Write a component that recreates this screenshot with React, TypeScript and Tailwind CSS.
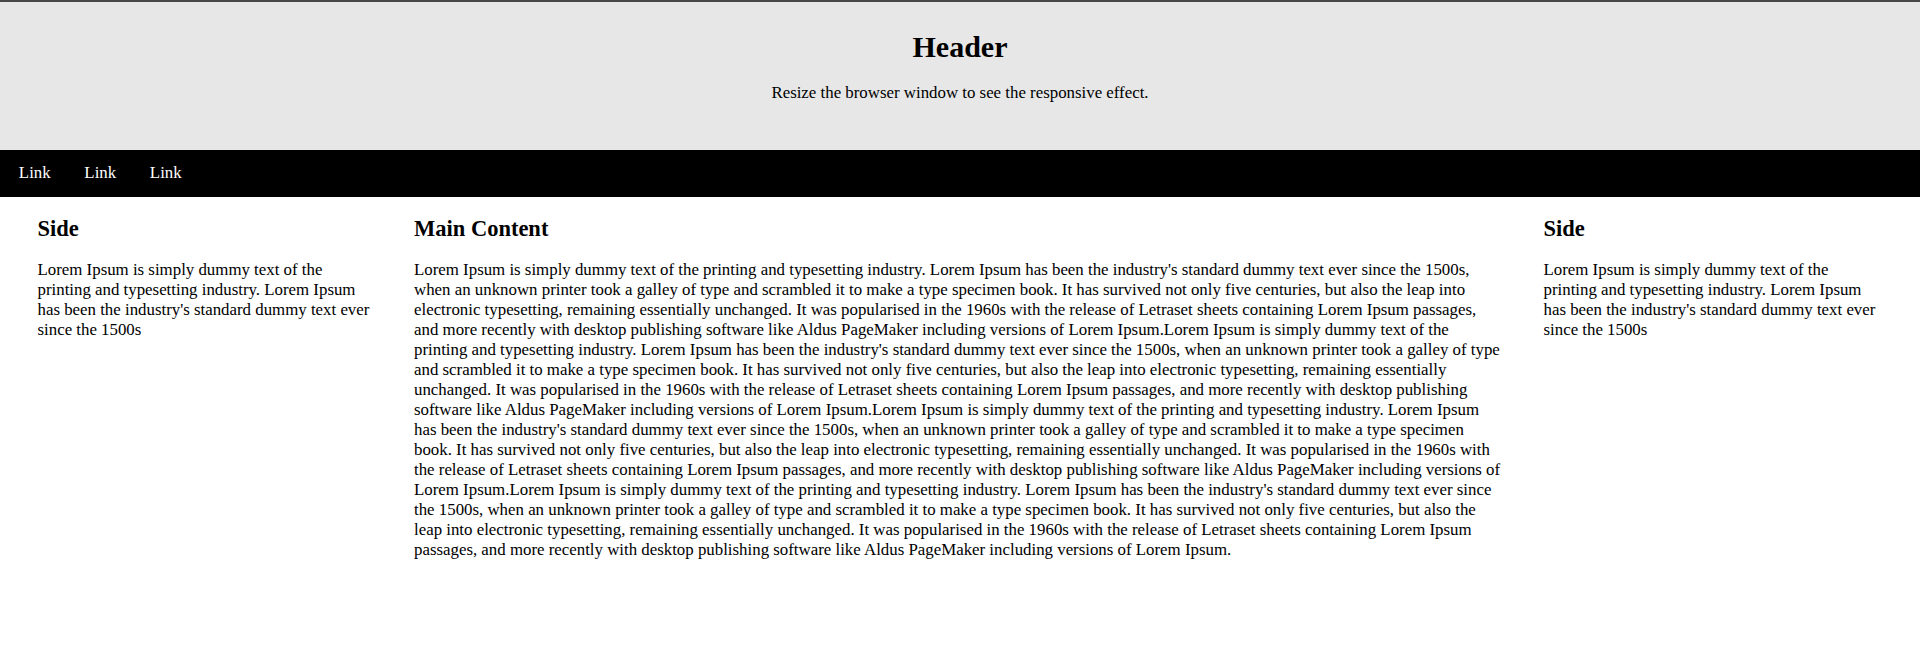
const lorem =
  "Lorem Ipsum is simply dummy text of the printing and typesetting industry. Lorem Ipsum has been the industry's standard dummy text ever since the 1500s, when an unknown printer took a galley of type and scrambled it to make a type specimen book. It has survived not only five centuries, but also the leap into electronic typesetting, remaining essentially unchanged. It was popularised in the 1960s with the release of Letraset sheets containing Lorem Ipsum passages, and more recently with desktop publishing software like Aldus PageMaker including versions of Lorem Ipsum.";

const sideText =
  "Lorem Ipsum is simply dummy text of the printing and typesetting industry. Lorem Ipsum has been the industry's standard dummy text ever since the 1500s";

type ColumnProps = {
  title: string;
  text: string;
  className: string;
};

function Column(props: ColumnProps) {
  return (
    <div className={`${props.className} shrink-0 pl-[18.75px] pt-[18.75px]`}>
      <h2 className="mb-[18px] text-[22.5px] font-bold leading-[25.9px]">{props.title}</h2>
      <p className="text-[16.85px] leading-[20px]">{props.text}</p>
    </div>
  );
}

export default function App() {
  const links = ["Link", "Link", "Link"];

  return (
    <div className="min-h-[669px] bg-white font-['Liberation_Serif','Times_New_Roman',serif] text-black">
      {/* Header */}
      <header className="border-t-2 border-[#484848] bg-[#e7e7e7] pt-[28px] pb-[47px] text-center">
        <h1 className="text-[30px] font-bold leading-[34.5px]">Header</h1>
        <p className="mt-[18.6px] text-[16.85px] leading-[20px]">
          Resize the browser window to see the responsive effect.
        </p>
      </header>

      {/* Nav */}
      <nav className="flex bg-black pl-[2px]">
        {links.map((link, i) => (
          <a
            key={i}
            href="#"
            className="px-[16.85px] pt-[13px] pb-[14px] text-[16.85px] leading-[20px] text-white"
          >
            {link}
          </a>
        ))}
      </nav>

      {/* Columns */}
      <div className="flex px-[18.75px]">
        <Column title="Side" text={sideText} className="w-1/5 pr-[18.75px]" />
        <Column
          title="Main Content"
          text={lorem + lorem + lorem + lorem}
          className="w-3/5 pr-[21.25px]"
        />
        <Column title="Side" text={sideText} className="w-1/5 pr-[18.75px]" />
      </div>
    </div>
  );
}
